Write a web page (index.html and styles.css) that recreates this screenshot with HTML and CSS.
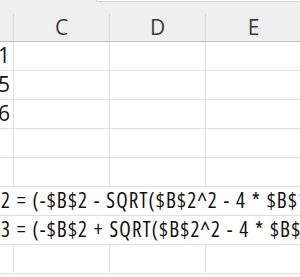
FILE: index.html
```html
<!DOCTYPE html>
<html>
    <head>
        <title>Sheet</title>
        <link rel="stylesheet" href="styles.css">
    </head>
    <body>
        <div class="topbar">
            <div class="tab"></div>
            <div class="edge"></div>
        </div>
        <div class="sheet">
            <div class="colhead"></div>
            <div class="colhead">C</div>
            <div class="colhead">D</div>
            <div class="colhead">E</div>
            <div class="colhead last"></div>

            <div class="cell num">1</div><div class="cell"></div><div class="cell"></div><div class="cell"></div><div class="cell last"></div>
            <div class="cell num">5</div><div class="cell"></div><div class="cell"></div><div class="cell"></div><div class="cell last"></div>
            <div class="cell num">6</div><div class="cell"></div><div class="cell"></div><div class="cell"></div><div class="cell last"></div>
            <div class="cell"></div><div class="cell"></div><div class="cell"></div><div class="cell"></div><div class="cell last"></div>
            <div class="cell"></div><div class="cell"></div><div class="cell"></div><div class="cell"></div><div class="cell last"></div>
            <div class="cell wide">2 = (-$B$2 - SQRT($B$2^2 - 4 * $B$1 * $B$3)) / (2 * $B$1)</div>
            <div class="cell wide">3 = (-$B$2 + SQRT($B$2^2 - 4 * $B$1 * $B$3)) / (2 * $B$1)</div>
            <div class="cell"></div><div class="cell"></div><div class="cell"></div><div class="cell"></div><div class="cell last"></div>
        </div>
    </body>
</html>
```

FILE: styles.css
```css
body {
    margin: 0px;
    overflow: hidden;
    height: 277px;
    background: #ffffff;
    font-family: "Open Sans", sans-serif;
}

/* strip above the column letters */
.topbar {
    display: flex;
    height: 14px;
    background: #efefef;
}

.tab {
    width: 96px;
}

.edge {
    flex: 1;
    height: 1px;
    background: #ffffff;
    border-bottom: 1px solid #d4d4d4;
    border-left: 1px solid #d4d4d4;
    border-bottom-left-radius: 3px;
}

.sheet {
    display: grid;
    grid-template-columns: 14px 96px 96px 96px 1fr;
}

.colhead {
    height: 27px;
    background: #efefef;
    border-right: 1px solid #d8d8d8;
    border-bottom: 1px solid #bcbcbc;
    color: #3c3c3c;
    font-size: 21px;
    line-height: 27px;
    text-align: center;
}

.cell {
    height: 28px;
    border-right: 1px solid #e0e0e0;
    border-bottom: 1px solid #e0e0e0;
    color: #111111;
    font-size: 21px;
    line-height: 27px;
    white-space: nowrap;
}

.last {
    border-right: none;
}

.num {
    text-align: right;
    padding-right: 3px;
    overflow: hidden;
    direction: rtl;
}

/* formula text spills over the empty cells to its right */
.wide {
    grid-column: 1 / -1;
    border-right: none;
    overflow: hidden;
    padding-left: 1px;
    font-stretch: 75%;
    letter-spacing: 1.2px;
    word-spacing: 0.5px;
}
```
